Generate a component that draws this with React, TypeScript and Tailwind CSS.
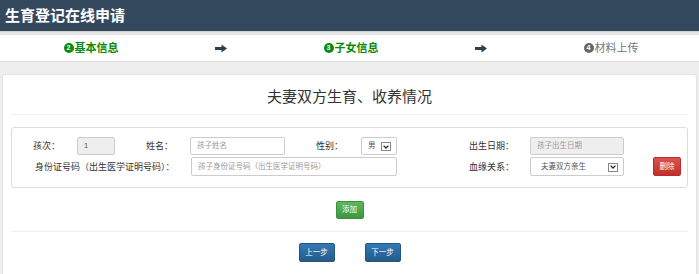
import { ReactNode } from 'react';

const font = { fontFamily: '"Liberation Sans", "Noto Sans CJK SC", sans-serif' };

const StepArrow = () => (
  <svg width="12" height="9" viewBox="0 0 12 9" className="text-[#2c3e50]">
    <path d="M0 3h6.5V0.5L12 4.5 6.5 8.5V6H0z" fill="currentColor" />
  </svg>
);

const Step = ({ num, label, active }: { num: string; label: string; active: boolean }) => (
  <div className="flex items-center justify-center">
    <span
      className={`w-[10px] h-[10px] rounded-full text-white text-[7px] font-bold leading-[10px] text-center mr-[1px] ${
        active ? 'bg-[#0a8a0a]' : 'bg-[#666]'
      }`}
    >
      {num}
    </span>
    <span className={`text-[11px] ${active ? 'text-[#0a8a0a] font-bold' : 'text-[#777]'}`}>{label}</span>
  </div>
);

const Label = ({ w, ml = 0, children }: { w: number; ml?: number; children: ReactNode }) => (
  <div style={{ width: w, marginLeft: ml }} className="text-[9px] text-[#333] shrink-0 leading-[18px] whitespace-nowrap">
    {children}
  </div>
);

const Field = ({
  w,
  h = 18,
  text,
  placeholder = false,
  disabled = false,
}: {
  w: number;
  h?: number;
  text: string;
  placeholder?: boolean;
  disabled?: boolean;
}) => (
  <div
    style={{ width: w, height: h }}
    className={`shrink-0 border border-[#ccc] rounded-[2px] px-[6px] flex items-center text-[7.5px] ${
      disabled ? 'bg-[#eeeeee]' : 'bg-white'
    } ${placeholder ? 'text-[#999]' : 'text-[#555]'}`}
  >
    {text}
  </div>
);

const SelectBox = ({ w, h, text, pl }: { w: number; h: number; text: string; pl: number }) => (
  <div
    style={{ width: w, height: h, paddingLeft: pl }}
    className="shrink-0 border border-[#ccc] rounded-[2px] bg-white flex items-center justify-between pr-[5px] text-[7.5px] text-[#555]"
  >
    <span>{text}</span>
    <span className="w-[10px] h-[9px] border border-[#888] flex items-center justify-center bg-white mt-[1px]">
      <svg width="6" height="4" viewBox="0 0 6 4">
        <path d="M0.6 0.6L3 3 5.4 0.6" stroke="#223" strokeWidth="1.3" fill="none" />
      </svg>
    </span>
  </div>
);

const Btn = ({ w, h, text, color }: { w: number; h: number; text: string; color: string }) => (
  <button
    style={{ width: w, height: h }}
    className={`text-white text-[7.5px] rounded-[2px] border ${color}`}
  >
    {text}
  </button>
);

export default function App() {
  return (
    <div style={font} className="w-[699px] h-[274px] bg-[#eeeeee] overflow-hidden">
      {/* Header */}
      <div className="h-[31px] bg-[#34495e] pl-[5px] text-white text-[15px] font-bold leading-[31px]">
        生育登记在线申请
      </div>
      <div className="h-[4px] bg-[#e4e4e4] border-t border-[#d0d0d0]" />

      {/* Steps */}
      <div className="h-[27px] bg-white border-b border-[#dddddd]">
        <div className="ml-[26px] w-[650px] h-full grid grid-cols-5 items-center">
          <Step num="2" label="基本信息" active />
          <div className="flex justify-center">
            <StepArrow />
          </div>
          <Step num="3" label="子女信息" active />
          <div className="flex justify-center">
            <StepArrow />
          </div>
          <Step num="4" label="材料上传" active={false} />
        </div>
      </div>

      {/* Card */}
      <div className="pt-[12px] px-[2px]">
        <div className="bg-white border border-[#e3e3e3] rounded-[3px] px-[8px] pb-[20px]">
          <div className="border-b border-[#eeeeee] pt-[12px] pb-[7px] text-center text-[15px] text-[#333] leading-[20px]">
            夫妻双方生育、收养情况
          </div>

          {/* Child panel */}
          <div className="mt-[12px] border border-[#dddddd] rounded-[3px] pt-[9px] pb-[11px]">
            <div className="flex items-center pl-[21px]">
              <Label w={44}>孩次：</Label>
              <Field w={38} text="1" disabled />
              <Label w={44} ml={31}>姓名：</Label>
              <Field w={95} text="孩子姓名" placeholder />
              <Label w={45} ml={31}>性别：</Label>
              <SelectBox w={36} h={18} pl={6} text="男" />
              <Label w={61} ml={72}>出生日期：</Label>
              <Field w={94} text="孩子出生日期" placeholder disabled />
            </div>
            <div className="flex items-center pl-[23px] mt-[2px]">
              <Label w={156}>身份证号码（出生医学证明号码）：</Label>
              <Field w={206} h={19} text="孩子身份证号码（出生医学证明号码）" placeholder />
              <Label w={61} ml={72}>血缘关系：</Label>
              <SelectBox w={94} h={19} pl={10} text="夫妻双方亲生" />
              <div className="ml-[29px] flex">
                <Btn w={28} h={19} text="删除" color="bg-gradient-to-b from-[#d9534f] to-[#c12e2a] border-[#b92c28]" />
              </div>
            </div>
          </div>

          <div className="flex justify-center mt-[13px] pb-[12px] border-b border-[#eeeeee]">
            <Btn w={28} h={18} text="添加" color="bg-gradient-to-b from-[#5cb85c] to-[#419641] border-[#3e8f3e]" />
          </div>

          <div className="flex justify-center gap-[30px] mt-[11px]">
            <Btn w={36} h={19} text="上一步" color="bg-gradient-to-b from-[#337ab7] to-[#265a88] border-[#245580]" />
            <Btn w={36} h={19} text="下一步" color="bg-gradient-to-b from-[#337ab7] to-[#265a88] border-[#245580]" />
          </div>
        </div>
      </div>
    </div>
  );
}
